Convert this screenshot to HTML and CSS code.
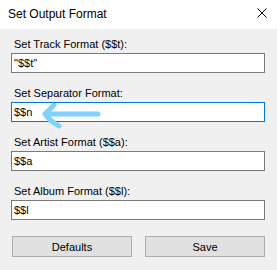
FILE: index.html
```html
<!DOCTYPE html>
<html lang="en">

<head>
    <meta charset="UTF-8">
    <title>Set Output Format</title>
    <link rel="stylesheet" href="styles.css">
</head>

<body>
    <div class="dialog">
        <div class="titlebar">
            <span class="title">Set Output Format</span>
            <svg class="close" width="10" height="10" viewBox="0 0 10 10">
                <path d="M0.5 0.5 L9.5 9.5 M9.5 0.5 L0.5 9.5" stroke="#000" stroke-width="1" fill="none" />
            </svg>
        </div>
        <div class="content">
            <div class="field">
                <label>Set Track Format ($$t):</label>
                <div class="input">"$$t"</div>
            </div>
            <div class="field">
                <label>Set Separator Format:</label>
                <div class="input focused">
                    $$n
                    <!-- hand-drawn pointer on top of the box -->
                    <svg class="arrow" width="90" height="28" viewBox="0 0 90 28">
                        <path d="M42 2 L33 11 Q38 18 47 23 M34 11 L86 11" stroke="#7fd2fd" stroke-width="5"
                            stroke-linecap="round" stroke-linejoin="round" fill="none" />
                    </svg>
                </div>
            </div>
            <div class="field">
                <label>Set Artist Format ($$a):</label>
                <div class="input">$$a</div>
            </div>
            <div class="field">
                <label>Set Album Format ($$l):</label>
                <div class="input">$$l</div>
            </div>
            <div class="buttons">
                <button type="button">Defaults</button>
                <button type="button">Save</button>
            </div>
        </div>
    </div>
</body>

</html>
```

FILE: styles.css
```css
body {
    margin: 0;
    padding: 0;
    font-family: "Liberation Sans", Arial, sans-serif;
    font-size: 11px;
    color: #000;
    background-color: #f0f0f0;
}

.dialog {
    width: 277px;
    height: 270px;
    background-color: #f0f0f0;
}

.titlebar {
    height: 29px;
    background-color: #fff;
    display: flex;
    align-items: center;
    justify-content: space-between;
    padding: 0 10px 0 8px;
    box-sizing: border-box;
    font-size: 12px;
}

.title {
    margin-top: -1px;
}

.close {
    margin-top: -4px;
}

.content {
    display: flex;
    flex-direction: column;
    padding: 8px 12px 0 11px;
    gap: 13px;
}

.field {
    display: flex;
    flex-direction: column;
}

.field label {
    line-height: 15px;
    height: 15px;
    margin-bottom: 1px;
    padding-left: 3px;
}

.input {
    position: relative;
    height: 20px;
    line-height: 18px;
    border: 1px solid #7a7a7a;
    background: #fff;
    padding-left: 2px;
    box-sizing: border-box;
}

.input.focused {
    border-color: #0078d7;
}

.arrow {
    position: absolute;
    left: 0;
    top: 0;
}

.buttons {
    display: flex;
    justify-content: space-between;
    margin-top: 3px;
    padding-left: 1px;
}

button {
    width: 120px;
    height: 21px;
    background-color: #e1e1e1;
    border: 1px solid #adadad;
    font-family: "Liberation Sans", Arial, sans-serif;
    font-size: 11px;
    color: #000;
    padding: 0;
}
```
